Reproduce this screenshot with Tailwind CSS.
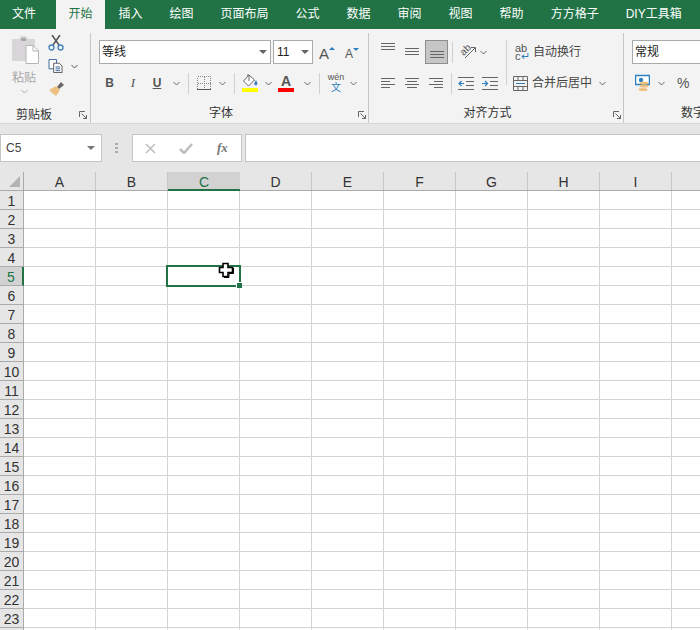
<!DOCTYPE html>
<html lang="zh">
<head>
<meta charset="UTF-8">
<title>Excel</title>
<script src="https://cdn.jsdelivr.net/npm/@tailwindcss/browser@4"></script>
</head>
<body class="w-[700px] h-[630px] overflow-hidden bg-white text-[12px] text-[#444] font-['Liberation_Sans','Noto_Sans_CJK_SC',sans-serif]">

<!-- tabs -->
<div class="flex h-[29px] bg-[#217346] text-white leading-[29px] whitespace-nowrap">
  <div class="w-[56px] pl-3">文件</div>
  <div class="w-[49px] text-center bg-[#f3f3f3] text-[#217346]">开始</div>
  <div class="px-[13.5px]">插入</div>
  <div class="px-[13.5px]">绘图</div>
  <div class="px-[13.5px]">页面布局</div>
  <div class="px-[13.5px]">公式</div>
  <div class="px-[13.5px]">数据</div>
  <div class="px-[13.5px]">审阅</div>
  <div class="px-[13.5px]">视图</div>
  <div class="px-[13.5px]">帮助</div>
  <div class="px-[13.5px]">方方格子</div>
  <div class="px-[13.5px]">DIY工具箱</div>
</div>

<!-- ribbon -->
<div class="flex h-[95px] bg-[#f3f3f3] border-b border-[#d6d6d6] overflow-hidden">

  <!-- clipboard -->
  <div class="relative w-[91px] h-[90px] shrink-0 mt-[4px] border-r border-[#c6c6c6] flex flex-col">
    <div class="flex h-[73px] pt-[2px]">
      <div class="w-[48px] flex flex-col items-center">
        <svg class="w-[30px] h-[30px] ml-[3px]" viewBox="0 0 30 30">
          <path d="M1 4h7l2-3h5l2 3h7v22H1z" fill="#d8d6d8"/>
          <rect x="10" y="3" width="5" height="3" fill="#a9a9a9"/>
          <path d="M15 10.500h7l5.500 5.500v12.500H15z" fill="#fff" stroke="#b5b5b5"/>
          <path d="M22 10.500v5.500h5.500" fill="none" stroke="#b5b5b5"/>
        </svg>
        <div class="text-[#a6a6a6] text-[12px] leading-[14px] mt-[6px]">粘贴</div>
        <svg class="w-[7px] h-[5px] mt-[4px]" viewBox="0 0 7 5"><path d="M.5 1l3 3 3-3" fill="none" stroke="#a6a6a6"/></svg>
      </div>
      <div class="flex flex-col">
        <svg class="w-[16px] h-[16px]" viewBox="0 0 16 16">
          <path d="M4 0l7 10M12 0L5 10" stroke="#555" stroke-width="1.500" fill="none"/>
          <circle cx="3.500" cy="12.500" r="2.500" fill="none" stroke="#3f7fbf" stroke-width="1.300"/>
          <circle cx="12.500" cy="12.500" r="2.500" fill="none" stroke="#3f7fbf" stroke-width="1.300"/>
        </svg>
        <div class="flex items-center mt-[8px] h-[14px]">
          <svg class="w-[16px] h-[14px]" viewBox="0 0 16 15">
            <path d="M.5.500h8v10h-8z" fill="#fff" stroke="#2f5f96"/>
            <path d="M5.500 4.500h6l3 3v7h-9z" fill="#fff" stroke="#555"/>
            <path d="M7.500 8.500h5M7.500 10.500h5M7.500 12.500h5" stroke="#2f5f96"/>
          </svg>
          <svg class="w-[7px] h-[5px] ml-[7px]" viewBox="0 0 7 5"><path d="M.5 1l3 3 3-3" fill="none" stroke="#555"/></svg>
        </div>
        <svg class="w-[17px] h-[15px] mt-[8px]" viewBox="0 0 17 15">
          <path d="M9 6l4-5 3 3-5 4z" fill="#666"/>
          <path d="M1 9l7-4 4 4-4 6q-4-3-7-6z" fill="#eec07f"/>
        </svg>
      </div>
    </div>
    <div class="text-center pr-[22px] leading-[14px] text-[#333] mt-[2px]">剪贴板</div>
    <svg class="absolute left-[79px] top-[78px] w-[8px] h-[8px]" viewBox="0 0 8 8"><path d="M.5 6V.5H6M2.500 2.500l5 5M7.500 4v3.500H4" fill="none" stroke="#666"/></svg>
  </div>

  <!-- font -->
  <div class="relative w-[278px] h-[90px] shrink-0 mt-[4px] border-r border-[#c6c6c6]">
    <div class="flex mt-[7px] h-[24px] ml-[8px]">
      <div class="w-[172px] h-[24px] bg-white border border-[#ababab] flex items-center justify-between pl-[2px] pr-[3px] text-[#222]">等线<i class="w-0 h-0 border-x-[4px] border-x-transparent border-t-[4px] border-t-[#666]"></i></div>
      <div class="w-[40px] h-[24px] ml-[2px] bg-white border border-[#ababab] flex items-center justify-between pl-[3px] pr-[3px] text-[#222]">11<i class="w-0 h-0 border-x-[4px] border-x-transparent border-t-[4px] border-t-[#666]"></i></div>
      <div class="w-[26px] ml-[6px] flex items-end text-[15px] leading-[20px] text-[#555]">A<i class="mb-[14px] w-0 h-0 border-x-[3px] border-x-transparent border-b-[3px] border-b-[#2f7fbf]"></i></div>
      <div class="w-[20px] flex items-end text-[12px] leading-[19px] text-[#555]">A<i class="mb-[13px] w-0 h-0 border-x-[3px] border-x-transparent border-t-[3px] border-t-[#2f7fbf]"></i></div>
    </div>
    <div class="flex items-center h-[24px] mt-[7px] text-[#555]">
      <div class="w-[30px] text-right pr-[7px] font-bold text-[12px]">B</div>
      <div class="w-[24px] text-center italic font-['Liberation_Serif'] text-[13px]">I</div>
      <div class="w-[24px] text-center font-bold text-[12px] underline">U</div>
      <svg class="w-[7px] h-[5px] ml-[4px]" viewBox="0 0 7 5"><path d="M.5 1l3 3 3-3" fill="none" stroke="#666"/></svg>
      <div class="w-px h-[21px] bg-[#d0d0d0] ml-[8px] mr-[8px]"></div>
      <svg class="w-[14px] h-[14px]" viewBox="0 0 14 14" shape-rendering="crispEdges"><path d="M.5.500h13v13H.5zM7 .5v13M.5 7h13" fill="none" stroke="#888" stroke-dasharray="1 1"/><path d="M0 13.500h14" stroke="#555"/></svg>
      <svg class="w-[7px] h-[5px] ml-[8px]" viewBox="0 0 7 5"><path d="M.5 1l3 3 3-3" fill="none" stroke="#666"/></svg>
      <div class="w-px h-[21px] bg-[#d0d0d0] ml-[8px] mr-[7px]"></div>
      <svg class="w-[17px] h-[18px]" viewBox="0 0 17 18">
        <path d="M7 1L1.500 7l5 5 6-6z" fill="#fff" stroke="#666"/>
        <path d="M5 1h2v6" fill="none" stroke="#666"/>
        <path d="M14 6q2 3 1 5-2 1-3-1z" fill="#3f7fbf"/>
        <rect y="14" width="16" height="4" fill="#ffff00"/>
      </svg>
      <svg class="w-[7px] h-[5px] ml-[6px]" viewBox="0 0 7 5"><path d="M.5 1l3 3 3-3" fill="none" stroke="#666"/></svg>
      <div class="w-[16px] ml-[6px] flex flex-col items-center">
        <div class="font-bold text-[14px] leading-[13px] text-[#555]">A</div>
        <div class="w-[16px] h-[4px] bg-[#ff0000]"></div>
      </div>
      <svg class="w-[7px] h-[5px] ml-[10px]" viewBox="0 0 7 5"><path d="M.5 1l3 3 3-3" fill="none" stroke="#666"/></svg>
      <div class="w-px h-[21px] bg-[#d0d0d0] ml-[8px] mr-[7px]"></div>
      <div class="w-[18px] flex flex-col items-center leading-none">
        <div class="text-[9px] leading-[9px] text-[#555] whitespace-nowrap">wén</div>
        <div class="text-[10px] leading-[11px] text-[#2f7fbf]">文</div>
      </div>
      <svg class="w-[7px] h-[5px] ml-[5px]" viewBox="0 0 7 5"><path d="M.5 1l3 3 3-3" fill="none" stroke="#666"/></svg>
    </div>
    <div class="text-center mt-[11px] pr-[17px] leading-[14px] text-[#333]">字体</div>
    <svg class="absolute left-[267px] top-[78px] w-[8px] h-[8px]" viewBox="0 0 8 8"><path d="M.5 6V.5H6M2.500 2.500l5 5M7.500 4v3.500H4" fill="none" stroke="#666"/></svg>
  </div>

  <!-- alignment -->
  <div class="relative w-[255px] h-[90px] shrink-0 mt-[4px] border-r border-[#c6c6c6]">
    <div class="flex h-[24px] mt-[7px] pl-[12px] items-center">
      <svg class="w-[14px] h-[24px]" viewBox="0 0 14 24"><path d="M0 3.500h14M0 6.500h14M0 9.500h14" stroke="#666"/></svg>
      <svg class="w-[14px] h-[24px] ml-[10px]" viewBox="0 0 14 24"><path d="M0 8.500h14M0 11.500h14M0 14.500h14" stroke="#666"/></svg>
      <div class="w-[23px] h-[24px] ml-[6px] bg-[#c6c6c6] border border-[#8e8e8e] flex items-end justify-center pb-[4px]">
        <svg class="w-[14px] h-[8px]" viewBox="0 0 14 8"><path d="M0 .5h14M0 3.500h14M0 6.500h14" stroke="#666"/></svg>
      </div>
      <div class="w-px h-[21px] bg-[#d0d0d0] ml-[4px] mr-[7px]"></div>
      <div class="relative w-[16px] h-[16px]">
        <span class="absolute left-0 top-[1px] -rotate-45 text-[10px] leading-[10px] text-[#555]">ab</span>
        <svg class="absolute inset-0 w-[16px] h-[16px]" viewBox="0 0 16 16"><path d="M5 14L15 4M11 3.500h4.500V8" fill="none" stroke="#666"/></svg>
      </div>
      <svg class="w-[7px] h-[5px] ml-[4px]" viewBox="0 0 7 5"><path d="M.5 1l3 3 3-3" fill="none" stroke="#666"/></svg>
      <div class="w-px h-[45px] self-start bg-[#d0d0d0] ml-[19px] mr-[8px] shrink-0"></div>
      <div class="w-[15px] text-[11px] leading-[8px] text-[#555]">ab<br>c<span class="text-[#2f7fbf]">↵</span></div>
      <div class="ml-[3px] text-[#444] whitespace-nowrap">自动换行</div>
    </div>
    <div class="flex h-[24px] mt-[7px] pl-[12px] items-center">
      <svg class="w-[14px] h-[11px]" viewBox="0 0 14 11"><path d="M0 .5h14M0 3.500h9M0 6.500h14M0 9.500h9" stroke="#666"/></svg>
      <svg class="w-[14px] h-[11px] ml-[10px]" viewBox="0 0 14 11"><path d="M0 .5h14M2 3.500h10M0 6.500h14M2 9.500h10" stroke="#666"/></svg>
      <svg class="w-[14px] h-[11px] ml-[10px]" viewBox="0 0 14 11"><path d="M0 .5h14M5 3.500h9M0 6.500h14M5 9.500h9" stroke="#666"/></svg>
      <div class="w-px h-[21px] bg-[#d0d0d0] ml-[8px] mr-[6px]"></div>
      <svg class="w-[16px] h-[13px]" viewBox="0 0 16 13"><path d="M0 .5h16M8 4.500h8M8 8.500h8M0 12.500h16" stroke="#666"/><path d="M6 6.500H1M3.500 4L1 6.500 3.500 9" fill="none" stroke="#2f7fbf" stroke-width="1.200"/></svg>
      <svg class="w-[16px] h-[13px] ml-[8px]" viewBox="0 0 16 13"><path d="M0 .5h16M8 4.500h8M8 8.500h8M0 12.500h16" stroke="#666"/><path d="M0 6.500h5M3 4l2.500 2.500L3 9" fill="none" stroke="#2f7fbf" stroke-width="1.200"/></svg>
      <div class="w-[15px] h-px"></div>
      <svg class="w-[15px] h-[15px]" viewBox="0 0 15 15"><path d="M.5.500h14v14H.5zM.5 4.500h14M.5 10.500h14M5 .5v4M10 .5v4M5 10.500v4M10 10.500v4" fill="none" stroke="#666"/><path d="M3 7.500h9" stroke="#2f7fbf"/></svg>
      <div class="ml-[4px] text-[#444] whitespace-nowrap">合并后居中</div>
      <svg class="w-[7px] h-[5px] ml-[7px]" viewBox="0 0 7 5"><path d="M.5 1l3 3 3-3" fill="none" stroke="#666"/></svg>
    </div>
    <div class="text-center mt-[11px] pr-[17px] leading-[14px] text-[#333]">对齐方式</div>
    <svg class="absolute left-[244px] top-[78px] w-[8px] h-[8px]" viewBox="0 0 8 8"><path d="M.5 6V.5H6M2.500 2.500l5 5M7.500 4v3.500H4" fill="none" stroke="#666"/></svg>
  </div>

  <!-- number -->
  <div class="flex-1 mt-[4px] pl-[8px] min-w-0">
    <div class="mt-[7px] h-[24px] w-[90px] bg-white border border-[#ababab] pl-[2px] leading-[22px] text-[#222]">常规</div>
    <div class="flex items-center h-[24px] mt-[7px] pl-[3px]">
      <svg class="w-[15px] h-[18px]" viewBox="0 0 15 18">
        <path d="M.5 1.500h14v9H.5z" fill="#fff" stroke="#2f7fbf" stroke-width="1.500"/>
        <circle cx="6" cy="6" r="2.200" fill="#2f7fbf"/>
        <ellipse cx="9" cy="9" rx="4.500" ry="1.500" fill="#eec07f"/>
        <ellipse cx="9" cy="12" rx="4.500" ry="1.500" fill="#eec07f"/>
        <ellipse cx="8" cy="15.500" rx="4.500" ry="1.500" fill="#eec07f"/>
      </svg>
      <svg class="w-[7px] h-[5px] ml-[8px]" viewBox="0 0 7 5"><path d="M.5 1l3 3 3-3" fill="none" stroke="#666"/></svg>
      <div class="ml-[12px] text-[14px] text-[#555]">%</div>
    </div>
    <div class="mt-[11px] pl-[49px] leading-[14px] text-[#333] whitespace-nowrap">数字</div>
  </div>
</div>

<!-- formula bar -->
<div class="flex items-center h-[48px] bg-[#e6e6e6]">
  <div class="w-[102px] h-[28px] bg-white border border-[#c6c6c6] flex items-center justify-between pl-[5px] pr-[6px] text-[#444]">C5<i class="w-0 h-0 border-x-[4px] border-x-transparent border-t-[4px] border-t-[#777]"></i></div>
  <svg class="w-[4px] h-[12px] ml-[13px]" viewBox="0 0 4 12"><path d="M0 1h3v2H0zM0 5h3v2H0zM0 9h3v2H0z" fill="#ababab"/></svg>
  <div class="w-[110px] h-[28px] ml-[13px] bg-white border border-[#c6c6c6] flex items-center text-[#a6a6a6]">
    <svg class="w-[11px] h-[11px] ml-[12px]" viewBox="0 0 11 11"><path d="M1 1l9 9M10 1l-9 9" stroke="#bdbdbd" stroke-width="1.500"/></svg>
    <svg class="w-[14px] h-[11px] ml-[23px]" viewBox="0 0 14 11"><path d="M1 6l4 4 8-9" fill="none" stroke="#bdbdbd" stroke-width="2.500"/></svg>
    <div class="ml-[24px] italic font-bold font-['Liberation_Serif'] text-[13px] text-[#777]">fx</div>
  </div>
  <div class="flex-1 h-[28px] ml-[3px] bg-white border-y border-l border-[#c6c6c6]"></div>
</div>

<!-- sheet -->
<div class="relative">
  <div id="head" class="flex h-[19px] bg-[#e6e6e6] border-b border-[#ababab] text-[14px] font-light text-[#333]">
    <div class="relative w-[24px] h-[18px] shrink-0 border-r border-[#ababab]">
      <div class="absolute right-[3px] bottom-[3px] w-0 h-0 border-l-[11px] border-l-transparent border-b-[11px] border-b-[#b4b4b4]"></div>
    </div>
  </div>
  <div id="rows"></div>

  <!-- active cell -->
  <div class="absolute left-[166px] top-[93px] w-[75px] h-[22px] border-2 border-[#217346]">
    <div class="absolute -right-[3px] -bottom-[3px] w-[6px] h-[6px] bg-[#217346] border-l border-t border-white"></div>
  </div>
  <svg class="absolute left-[218px] top-[90px] w-[16px] h-[16px]" viewBox="0 0 16 16">
    <path d="M5 1.500h5v4h4.500v5H10v4H5v-4H1.500v-5H5z" fill="#fff" stroke="#000" stroke-width="1.600"/>
    <path d="M15.500 6v5.500H11v4H6" fill="none" stroke="#000"/>
  </svg>
</div>

<script>
  const cols = ['A', 'B', 'C', 'D', 'E', 'F', 'G', 'H', 'I', ''];
  const head = document.getElementById('head');
  const rows = document.getElementById('rows');

  cols.forEach(c => {
    const el = document.createElement('div');
    el.className = c === 'C'
      ? 'w-[72px] h-[19px] shrink-0 text-center leading-[21px] bg-[#d2d2d2] border-b-2 border-[#217346] text-[#217346]'
      : 'w-[72px] h-[18px] shrink-0 text-center leading-[21px] border-r border-[#c6c6c6]';
    el.textContent = c;
    head.appendChild(el);
  });

  // row 24 only shows its top edge, so it stays unlabelled
  for (let r = 1; r <= 24; r++) {
    const row = document.createElement('div');
    row.className = 'flex h-[19px]';
    const label = document.createElement('div');
    label.className = r === 5
      ? 'w-[24px] h-[19px] shrink-0 text-center leading-[21px] text-[14px] font-light bg-[#d2d2d2] border-b border-[#ababab] border-r-2 border-r-[#217346] text-[#217346]'
      : 'w-[24px] h-[19px] shrink-0 text-center leading-[21px] text-[14px] font-light bg-[#e6e6e6] border-b border-[#ababab] border-r border-r-[#ababab] text-[#333]';
    label.textContent = r < 24 ? r : '';
    row.appendChild(label);
    cols.forEach(() => {
      const cell = document.createElement('div');
      cell.className = 'w-[72px] h-[19px] shrink-0 border-r border-b border-[#d4d4d4]';
      row.appendChild(cell);
    });
    rows.appendChild(row);
  }
</script>
</body>
</html>
